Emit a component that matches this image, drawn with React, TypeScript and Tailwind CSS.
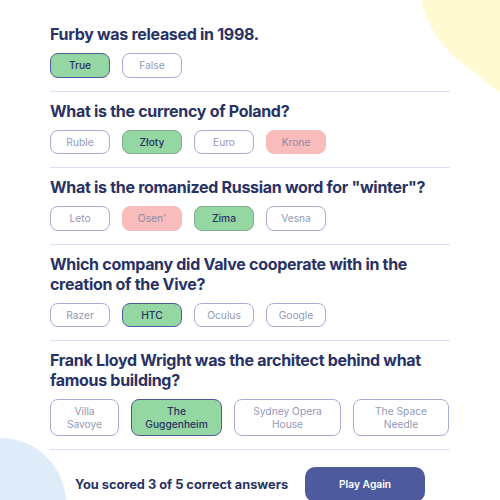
import React from "react";

type Answer = {
  text: string;
  state: "picked-right" | "right" | "picked-wrong" | "idle";
  width?: string;
};

interface Question {
  question: string;
  answers: Answer[];
}

const questions: Question[] = [
  {
    question: "Furby was released in 1998.",
    answers: [
      { text: "True", state: "picked-right" },
      { text: "False", state: "idle" },
    ],
  },
  {
    question: "What is the currency of Poland?",
    answers: [
      { text: "Ruble", state: "idle" },
      { text: "Złoty", state: "right" },
      { text: "Euro", state: "idle" },
      { text: "Krone", state: "picked-wrong" },
    ],
  },
  {
    question: 'What is the romanized Russian word for "winter"?',
    answers: [
      { text: "Leto", state: "idle" },
      { text: "Osen'", state: "picked-wrong" },
      { text: "Zima", state: "right" },
      { text: "Vesna", state: "idle" },
    ],
  },
  {
    question: "Which company did Valve cooperate with in the creation of the Vive?",
    answers: [
      { text: "Razer", state: "idle" },
      { text: "HTC", state: "picked-right" },
      { text: "Oculus", state: "idle" },
      { text: "Google", state: "idle" },
    ],
  },
  {
    question: "Frank Lloyd Wright was the architect behind what famous building?",
    answers: [
      { text: "Villa Savoye", state: "idle", width: "w-[69px]" },
      { text: "The Guggenheim", state: "picked-right", width: "w-[91px]" },
      { text: "Sydney Opera House", state: "idle", width: "w-[107px]" },
      { text: "The Space Needle", state: "idle", width: "w-[96px]" },
    ],
  },
];

const stateClass: Record<Answer["state"], string> = {
  "picked-right": "bg-[#94D7A2] border-[#4D5B9E] text-[#293264] font-medium",
  right: "bg-[#94D7A2] border-[#7FAE91] text-[#293264] font-medium",
  "picked-wrong": "bg-[#F8BCBC] border-[#F8BCBC] text-[#8f8aa6]",
  idle: "bg-white border-[#A6ADD3] text-[#9499B7]",
};

const App: React.FC = () => {
  return (
    <div className="relative min-h-screen bg-white overflow-hidden">
      <svg
        className="absolute top-0 right-0"
        width="80"
        height="95"
        viewBox="420 0 80 95"
      >
        <path d="M421 0 Q428 30 452 55 L500 93 L500 0 Z" fill="#FFFAD1" />
      </svg>
      <svg
        className="absolute left-0 top-[434px]"
        width="70"
        height="66"
        viewBox="0 434 70 66"
      >
        <circle cx="0" cy="504" r="66" fill="#DEEBF8" />
      </svg>

      <div className="relative w-[400px] mx-auto pt-6">
        {questions.map(({ question, answers }, i) => (
          <div key={question} className={i === 0 ? "" : "pt-[9px]"}>
            <h2 className="text-[16px] leading-[20px] font-bold text-[#293264] font-['Inter',sans-serif] tracking-[-0.3px]">
              {question}
            </h2>
            <div className="flex gap-3 mt-[9px]">
              {answers.map((a) => (
                <div
                  key={a.text}
                  className={`${a.width ?? "w-[60px]"} flex items-center justify-center text-center border rounded-[8px] px-2 py-[5px] text-[10.24px] leading-[12.5px] font-['Inter',sans-serif] ${stateClass[a.state]}`}
                >
                  {a.text}
                </div>
              ))}
            </div>
            <div className="mt-[13px] h-px bg-[#DBDEF0]" />
          </div>
        ))}

        <div className="flex items-center justify-center gap-[17px] mt-[17px]">
          <span className="text-[12.8px] font-bold text-[#293264] font-['Inter',sans-serif]">
            You scored 3 of 5 correct answers
          </span>
          <button className="w-[120px] h-[35px] rounded-[10px] bg-[#4D5B9E] text-white text-[10.24px] font-semibold font-['Inter',sans-serif]">
            Play Again
          </button>
        </div>
      </div>
    </div>
  );
};

export default App;
